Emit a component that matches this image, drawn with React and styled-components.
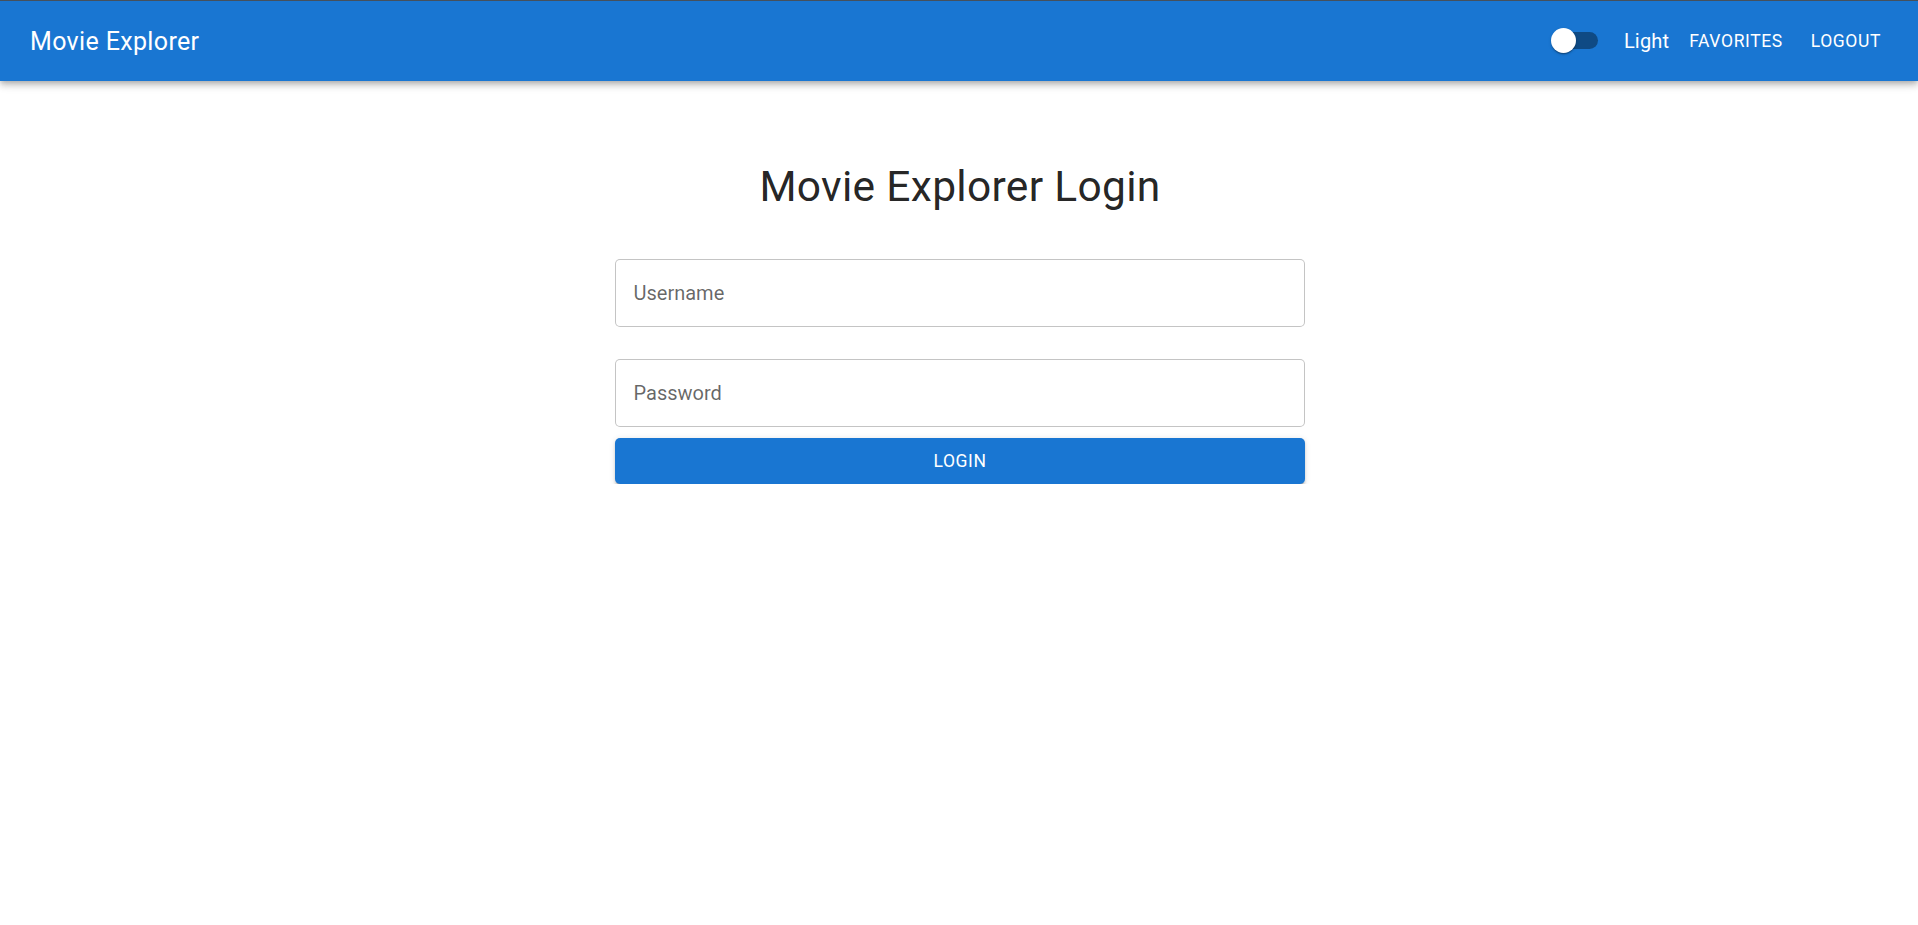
import React from 'react';
import styled, { createGlobalStyle } from 'styled-components';

const GlobalStyle = createGlobalStyle`
  body {
    margin: 0;
    background: #ffffff;
    font-family: Roboto, 'Liberation Sans', Arial, sans-serif;
  }
  * {
    box-sizing: border-box;
  }
`;

const AppBar = styled.header`
  display: flex;
  align-items: center;
  justify-content: space-between;
  height: 81px;
  padding: 0 30px;
  background: #1976d2;
  border-top: 1px solid #45505c;
  color: #fff;
  box-shadow: 0px 2.5px 5px -1.25px rgba(0, 0, 0, 0.2),
    0px 5px 6px 0px rgba(0, 0, 0, 0.14), 0px 1.25px 12.5px 0px rgba(0, 0, 0, 0.12);
  position: relative;
  z-index: 2;
`;

const Brand = styled.div`
  font-size: 25px;
  font-weight: 400;
  line-height: 40px;
  letter-spacing: 0.35px;
  margin-top: 2px;
`;

const NavGroup = styled.nav`
  display: flex;
  align-items: center;
  margin-right: -3px;
`;

const Switch = styled.span`
  position: relative;
  display: inline-block;
  width: 47px;
  height: 25px;
  margin-top: -1px;
`;

const Track = styled.span`
  position: absolute;
  left: 3px;
  top: 4px;
  width: 44px;
  height: 17px;
  border-radius: 9px;
  background: #0f4a84;
`;

const Thumb = styled.span`
  position: absolute;
  left: 0;
  top: 0;
  width: 25px;
  height: 25px;
  border-radius: 50%;
  background: #ffffff;
  box-shadow: 0px 2.5px 1.25px -1.25px rgba(0, 0, 0, 0.2),
    0px 1.25px 1.25px 0px rgba(0, 0, 0, 0.14), 0px 1.25px 3.75px 0px rgba(0, 0, 0, 0.12);
`;

const ThemeLabel = styled.span`
  font-size: 20px;
  font-weight: 400;
  line-height: 1.5;
  letter-spacing: 0.19px;
  margin-left: 26px;
  margin-right: 10px;
`;

const NavButton = styled.button`
  border: none;
  background: transparent;
  color: #ffffff;
  font-family: inherit;
  font-size: 17.5px;
  font-weight: 400;
  line-height: 1.75;
  letter-spacing: 0.6px;
  text-transform: uppercase;
  padding: 7.5px 10px;
  border-radius: 5px;
  cursor: pointer;

  & + & {
    margin-left: 8px;
  }
`;

const Main = styled.main`
  width: 692px;
  margin: 0 auto;
  padding: 80px 0 0 2px;
  display: flex;
  flex-direction: column;
`;

const Title = styled.h1`
  margin: 0 0 46px;
  text-align: center;
  font-size: 42.5px;
  font-weight: 400;
  line-height: 1.235;
  letter-spacing: 0.31px;
  color: rgba(0, 0, 0, 0.87);
`;

const Field = styled.input`
  width: 100%;
  height: 68px;
  margin-bottom: ${(p) => p.$gap}px;
  padding: 0 17.5px;
  border: 1px solid rgba(0, 0, 0, 0.23);
  border-radius: 5px;
  font-family: inherit;
  font-size: 20px;
  color: rgba(0, 0, 0, 0.87);
  outline: none;

  &::placeholder {
    color: rgba(0, 0, 0, 0.6);
    opacity: 1;
  }
`;

const SubmitButton = styled.button`
  width: 100%;
  height: 46px;
  border: none;
  border-radius: 5px;
  background: #1976d2;
  color: #ffffff;
  font-family: inherit;
  font-size: 17.5px;
  font-weight: 400;
  letter-spacing: 0.6px;
  text-transform: uppercase;
  cursor: pointer;
  box-shadow: 0px 3.75px 1.25px -2.5px rgba(0, 0, 0, 0.2),
    0px 2.5px 2.5px 0px rgba(0, 0, 0, 0.14), 0px 1.25px 6.25px 0px rgba(0, 0, 0, 0.12);
`;

function App() {
  return (
    <>
      <GlobalStyle />
      <AppBar>
        <Brand>Movie Explorer</Brand>
        <NavGroup>
          <Switch>
            <Track />
            <Thumb />
          </Switch>
          <ThemeLabel>Light</ThemeLabel>
          <NavButton>Favorites</NavButton>
          <NavButton>Logout</NavButton>
        </NavGroup>
      </AppBar>
      <Main>
        <Title>Movie Explorer Login</Title>
        <Field $gap={32} placeholder="Username" />
        <Field $gap={11} type="password" placeholder="Password" />
        <SubmitButton>Login</SubmitButton>
      </Main>
    </>
  );
}

export default App;
